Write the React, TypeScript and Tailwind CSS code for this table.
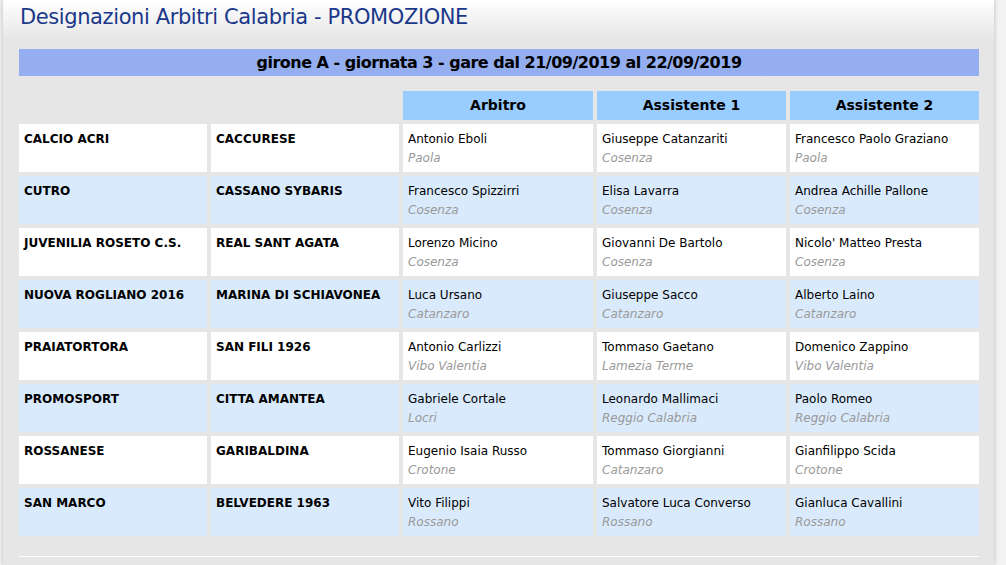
import React from 'react';

type Person = { name: string; city: string };
type Match = { home: string; away: string; ref: Person; a1: Person; a2: Person };

const MATCHES: Match[] = [
  {
    home: 'CALCIO ACRI',
    away: 'CACCURESE',
    ref: { name: 'Antonio Eboli', city: 'Paola' },
    a1: { name: 'Giuseppe Catanzariti', city: 'Cosenza' },
    a2: { name: 'Francesco Paolo Graziano', city: 'Paola' },
  },
  {
    home: 'CUTRO',
    away: 'CASSANO SYBARIS',
    ref: { name: 'Francesco Spizzirri', city: 'Cosenza' },
    a1: { name: 'Elisa Lavarra', city: 'Cosenza' },
    a2: { name: 'Andrea Achille Pallone', city: 'Cosenza' },
  },
  {
    home: 'JUVENILIA ROSETO C.S.',
    away: 'REAL SANT AGATA',
    ref: { name: 'Lorenzo Micino', city: 'Cosenza' },
    a1: { name: 'Giovanni De Bartolo', city: 'Cosenza' },
    a2: { name: "Nicolo' Matteo Presta", city: 'Cosenza' },
  },
  {
    home: 'NUOVA ROGLIANO 2016',
    away: 'MARINA DI SCHIAVONEA',
    ref: { name: 'Luca Ursano', city: 'Catanzaro' },
    a1: { name: 'Giuseppe Sacco', city: 'Catanzaro' },
    a2: { name: 'Alberto Laino', city: 'Catanzaro' },
  },
  {
    home: 'PRAIATORTORA',
    away: 'SAN FILI 1926',
    ref: { name: 'Antonio Carlizzi', city: 'Vibo Valentia' },
    a1: { name: 'Tommaso Gaetano', city: 'Lamezia Terme' },
    a2: { name: 'Domenico Zappino', city: 'Vibo Valentia' },
  },
  {
    home: 'PROMOSPORT',
    away: 'CITTA AMANTEA',
    ref: { name: 'Gabriele Cortale', city: 'Locri' },
    a1: { name: 'Leonardo Mallimaci', city: 'Reggio Calabria' },
    a2: { name: 'Paolo Romeo', city: 'Reggio Calabria' },
  },
  {
    home: 'ROSSANESE',
    away: 'GARIBALDINA',
    ref: { name: 'Eugenio Isaia Russo', city: 'Crotone' },
    a1: { name: 'Tommaso Giorgianni', city: 'Catanzaro' },
    a2: { name: 'Gianfilippo Scida', city: 'Crotone' },
  },
  {
    home: 'SAN MARCO',
    away: 'BELVEDERE 1963',
    ref: { name: 'Vito Filippi', city: 'Rossano' },
    a1: { name: 'Salvatore Luca Converso', city: 'Rossano' },
    a2: { name: 'Gianluca Cavallini', city: 'Rossano' },
  },
];

const font = { fontFamily: '"DejaVu Sans", Verdana, sans-serif' };

const PersonCell: React.FC<{ p: Person; bg: string }> = ({ p, bg }) => (
  <div className={`${bg} h-[48px] pl-[5px] pt-[6px] text-[12px] leading-[19px] text-black`}>
    <div>{p.name}</div>
    <div className="italic text-[#999999]">{p.city}</div>
  </div>
);

const App: React.FC = () => {
  return (
    <div className="w-[1006px] h-[565px] overflow-hidden bg-[#f4f4f4] flex" style={font}>
      <div className="ml-[3px] w-[991px] h-full bg-gradient-to-b from-white to-[#e6e6e6] to-[40px] shadow-[0_0_5px_rgba(0,0,0,0.25)] flex flex-col">
        <h1 className="pl-[17px] pt-[3px] h-[30px] text-[21px] leading-[28px] tracking-[-0.4px] text-[#1a388a]">
          Designazioni Arbitri Calabria - PROMOZIONE
        </h1>

        <div className="ml-[16px] mt-[19px] w-[960px] h-[27px] bg-[#94aef0] flex items-center justify-center text-[16px] font-bold tracking-[-0.5px] text-black">
          girone A - giornata 3 - gare dal 21/09/2019 al 22/09/2019
        </div>

        <div className="ml-[16px] mt-[15px] w-[960px] grid grid-cols-[188px_188px_190px_189px_189px] gap-[4px]">
          <div />
          <div />
          {['Arbitro', 'Assistente 1', 'Assistente 2'].map((h) => (
            <div key={h} className="h-[29px] bg-[#99ccff] flex items-center justify-center text-[14px] font-bold text-black">
              {h}
            </div>
          ))}

          {MATCHES.map((m, i) => {
            const bg = i % 2 === 0 ? 'bg-white' : 'bg-[#d9eafc]';
            return (
              <React.Fragment key={m.home}>
                <div className={`${bg} h-[48px] pl-[5px] pt-[6px] text-[12px] leading-[19px] font-bold text-black`}>{m.home}</div>
                <div className={`${bg} h-[48px] pl-[5px] pt-[6px] text-[12px] leading-[19px] font-bold text-black`}>{m.away}</div>
                <PersonCell p={m.ref} bg={bg} />
                <PersonCell p={m.a1} bg={bg} />
                <PersonCell p={m.a2} bg={bg} />
              </React.Fragment>
            );
          })}
        </div>

        <div className="ml-[16px] mt-[20px] w-[960px] h-px bg-white" />
      </div>
    </div>
  );
};

export default App;
